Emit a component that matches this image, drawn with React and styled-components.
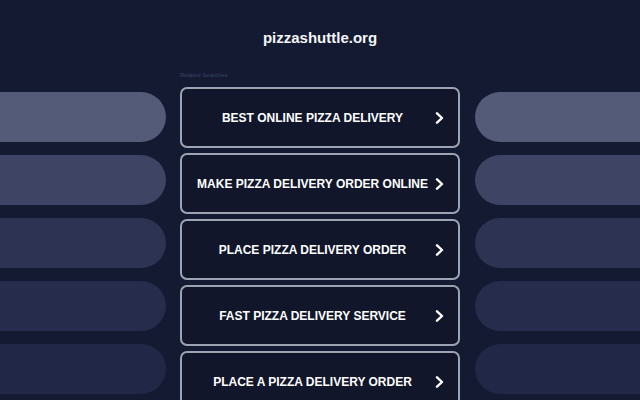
import styled, { createGlobalStyle } from 'styled-components';

const GlobalStyle = createGlobalStyle`
  html, body {
    margin: 0;
    padding: 0;
    height: 100%;
    overflow: hidden;
    background: #131a31;
  }
  body {
    font-family: "Liberation Sans", Arial, sans-serif;
  }
`;

const SEARCHES = [
  'BEST ONLINE PIZZA DELIVERY',
  'MAKE PIZZA DELIVERY ORDER ONLINE',
  'PLACE PIZZA DELIVERY ORDER',
  'FAST PIZZA DELIVERY SERVICE',
  'PLACE A PIZZA DELIVERY ORDER',
];

const PILL_COLORS = ['#535b78', '#3e4564', '#2d3453', '#252c4c', '#202747'];

const Page = styled.div`
  width: 640px;
  height: 400px;
  overflow: hidden;
`;

const Title = styled.h1`
  margin: 28px 0 0;
  height: 20px;
  line-height: 20px;
  text-align: center;
  font-size: 15px;
  font-weight: 700;
  color: #f4f5f8;
`;

const Columns = styled.div`
  margin-top: 18px;
  display: grid;
  grid-template-columns: 1fr 280px 1fr;
  column-gap: 14.5px;
`;

const Side = styled.div`
  padding-top: 26px;
  display: flex;
  flex-direction: column;
  gap: 13px;
  overflow: hidden;
`;

const Pill = styled.div`
  height: 50px;
  background: ${p => p.$color};
  border-radius: ${p => (p.$side === 'left' ? '0 25px 25px 0' : '25px 0 0 25px')};
`;

const Center = styled.div`
  display: flex;
  flex-direction: column;
`;

const Label = styled.div`
  height: 12px;
  line-height: 12px;
  margin: 3px 0 6px;
  font-size: 6px;
  color: #3c4363;
`;

const List = styled.div`
  display: flex;
  flex-direction: column;
  gap: 5px;
`;

const SearchButton = styled.a`
  box-sizing: border-box;
  height: 61px;
  display: flex;
  align-items: center;
  padding: 0 14px 0 8px;
  border: 2px solid #9ea3b3;
  border-radius: 7px;
  background: #11162b;
  color: #ffffff;
  text-decoration: none;
  cursor: pointer;
`;

const ButtonText = styled.span`
  flex: 1;
  text-align: center;
  font-size: 12px;
  font-weight: 700;
  white-space: nowrap;
`;

const Chevron = () => (
  <svg width="9" height="12" viewBox="0 0 9 12" fill="none">
    <path d="M2 1.3 L7 6 L2 10.7" stroke="#ffffff" strokeWidth="2.4" strokeLinecap="round" strokeLinejoin="round" />
  </svg>
);

export default function App() {
  return (
    <Page>
      <GlobalStyle />
      <Title>pizzashuttle.org</Title>
      <Columns>
        <Side>
          {PILL_COLORS.map(c => (
            <Pill key={c} $color={c} $side="left" />
          ))}
        </Side>
        <Center>
          <Label>Related Searches</Label>
          <List>
            {SEARCHES.map(text => (
              <SearchButton key={text}>
                <ButtonText>{text}</ButtonText>
                <Chevron />
              </SearchButton>
            ))}
          </List>
        </Center>
        <Side>
          {PILL_COLORS.map(c => (
            <Pill key={c} $color={c} $side="right" />
          ))}
        </Side>
      </Columns>
    </Page>
  );
}
